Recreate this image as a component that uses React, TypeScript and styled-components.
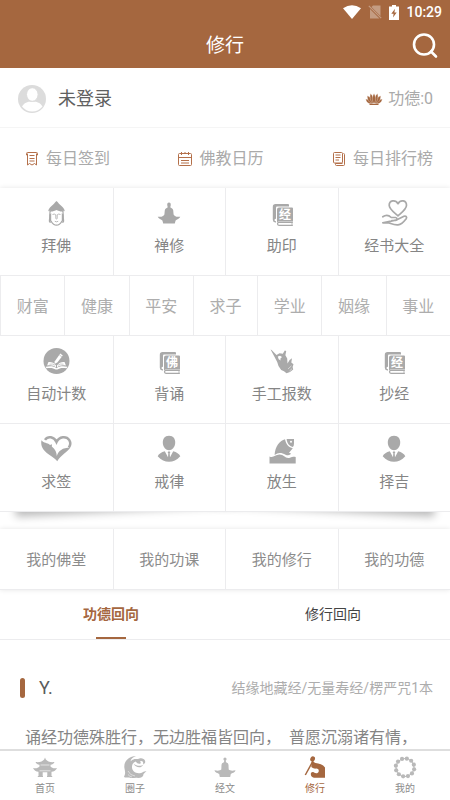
import React from "react";
import styled, { createGlobalStyle } from "styled-components";

const BROWN = "#a5673f";
const LINE = "#ececee";
const ICON = "#a9a9a9";

const GlobalStyle = createGlobalStyle`
  *, *::before, *::after { box-sizing: border-box; }
  body { margin: 0; background: #fff; }
  body, button, a {
    font-family: Roboto, "Noto Sans CJK SC", sans-serif;
    font-weight: 400;
  }
  button {
    margin: 0;
    padding: 0;
    border: 0;
    background: none;
    color: inherit;
    cursor: pointer;
  }
  a { color: inherit; text-decoration: none; }
  h1, h2, p { margin: 0; font-weight: 400; }
  svg { display: block; flex: none; overflow: visible; }
`;

const Screen = styled.div`
  display: flex;
  flex-direction: column;
  height: 100vh;
  background: #fff;
`;

const Header = styled.header`
  flex: none;
  background: ${BROWN};
  color: #fff;
`;

const StatusBar = styled.div`
  display: flex;
  justify-content: flex-end;
  align-items: center;
  gap: 7px;
  height: 24px;
  padding-right: 8px;
  font-size: 14px;
  font-weight: 500;
  line-height: 24px;
`;

const TitleBar = styled.div`
  display: grid;
  grid-template-columns: 1fr auto 1fr;
  align-items: center;
  height: 44px;
  padding: 0 12px;
`;

const Title = styled.h1`
  grid-column: 2;
  font-size: 19px;
  line-height: 28px;
`;

const SearchButton = styled.button`
  justify-self: end;
`;

const Content = styled.main`
  flex: 1;
  min-height: 0;
  overflow-y: auto;
  scrollbar-width: none;
`;

const Profile = styled.section`
  display: flex;
  justify-content: space-between;
  align-items: center;
  height: 60px;
  padding: 2px 17px 0 18px;
  border-bottom: 1px solid #f5f5f5;
`;

const User = styled.button`
  display: flex;
  align-items: center;
  gap: 12px;
  font-size: 18px;
  line-height: 28px;
  color: #606060;
`;

const Merit = styled.span`
  display: flex;
  align-items: center;
  gap: 6px;
  font-size: 16px;
  line-height: 24px;
  color: #aaa;
`;

const DailyLinks = styled.nav`
  display: flex;
  justify-content: space-between;
  align-items: center;
  height: 60px;
  padding: 2px 17px 0 25px;
`;

const DailyLink = styled.a`
  display: flex;
  align-items: center;
  gap: 7px;
  font-size: 16px;
  line-height: 24px;
  color: #aaa;
`;

const CellGrid = styled.div<{ $columns: number }>`
  display: grid;
  grid-template-columns: repeat(${(p) => p.$columns}, 1fr);
  background: #fff;
`;

const TopGrid = styled(CellGrid)`
  box-shadow: 0 0 5px rgba(0, 0, 0, 0.1);
`;

const Cell = styled.button`
  display: flex;
  flex-direction: column;
  align-items: center;
  gap: 8px;
  padding: 11px 0 18px;
  border-bottom: 1px solid ${LINE};
  font-size: 15px;
  line-height: 22px;
  color: #858585;

  &:not(:nth-child(4n + 1)) {
    border-left: 1px solid ${LINE};
  }
`;

const WishCell = styled.button`
  height: 60px;
  padding-top: 2px;
  border-left: 1px solid ${LINE};
  border-bottom: 1px solid ${LINE};
  font-size: 16px;
  line-height: 24px;
  color: #adadad;
`;

const LiftedPanel = styled.section`
  position: relative;
  isolation: isolate;
  margin-bottom: 17px;

  &::before,
  &::after {
    content: "";
    position: absolute;
    z-index: -1;
    bottom: 15px;
    width: 50%;
    height: 20%;
    box-shadow: 0 14px 9px rgba(0, 0, 0, 0.28);
  }
  &::before {
    left: 14px;
    transform: rotate(-3deg);
  }
  &::after {
    right: 14px;
    transform: rotate(3deg);
  }
`;

const MineCell = styled.button`
  height: 61px;
  padding-top: 2px;
  border-bottom: 1px solid ${LINE};
  font-size: 15px;
  line-height: 22px;
  color: #8c8c8c;

  &:not(:first-child) {
    border-left: 1px solid ${LINE};
  }
`;

const Tabs = styled.div`
  display: grid;
  grid-template-columns: 1fr 1fr;
  height: 50px;
  padding-right: 6px;
  border-bottom: 1px solid ${LINE};
`;

const Tab = styled.button<{ $active?: boolean }>`
  display: flex;
  flex-direction: column;
  align-items: center;
  justify-content: space-between;
  padding-top: 13px;
  font-size: 14px;
  line-height: 22px;
  font-weight: ${(p) => (p.$active ? 700 : 400)};
  color: ${(p) => (p.$active ? BROWN : "#444")};

  &::after {
    content: "";
    width: 30px;
    height: 2px;
    background: ${(p) => (p.$active ? BROWN : "transparent")};
  }
`;

const Post = styled.article`
  padding: 36px 17px 24px 20px;
`;

const PostHead = styled.div`
  display: flex;
  align-items: center;
  height: 24px;
  font-size: 14px;
  line-height: 24px;
  color: #adadad;

  &::before {
    content: "";
    width: 5px;
    height: 20px;
    margin-right: 14px;
    border-radius: 3px;
    background: ${BROWN};
  }
`;

const PostName = styled.h2`
  flex: 1;
  font-size: 18px;
  line-height: 24px;
  color: #5c5c5c;
`;

const PostText = styled.p`
  padding: 26px 0 0 5px;
  font-size: 16px;
  line-height: 24px;
  color: #858585;
  white-space: pre-wrap;
`;

const TabBar = styled.nav`
  flex: none;
  display: grid;
  grid-template-columns: repeat(5, 1fr);
  border-top: 2px solid #dedede;
  background: #fff;
`;

const TabBarItem = styled.a<{ $active?: boolean }>`
  display: flex;
  flex-direction: column;
  align-items: center;
  gap: 1px;
  height: 49px;
  padding-top: 5px;
  font-size: 10px;
  line-height: 16px;
  color: ${(p) => (p.$active ? BROWN : "#8c8c8c")};

  svg {
    color: ${(p) => (p.$active ? BROWN : "#b9b9b9")};
  }
`;

/* ---------- icons ---------- */

const CellSvg = ({ children }: { children: React.ReactNode }) => (
  <svg width="28" height="28" viewBox="0 0 28 28" fill={ICON} aria-hidden="true">
    {children}
  </svg>
);

const BuddhaIcon = () => (
  <CellSvg>
    <path d="M14.500 2C15.800 2.700 16.200 4 17.800 5.500C20 7.500 22.500 9.300 22.800 12.300C19.500 11.300 17 10.800 14.500 10.800S9.500 11.300 6.200 12.300C6.500 9.300 9 7.500 11.200 5.500C12.800 4 13.200 2.700 14.500 2Z" />
    <path
      d="M8.300 11.500C7.300 14.500 8.200 18 7.400 21.500C7.200 23.300 8.500 23.600 9.300 22.500C10.800 25.200 12.500 26.200 14.500 26.200S18.200 25.200 19.700 22.500C20.500 23.600 21.800 23.300 21.600 21.500C20.800 18 21.700 14.500 20.700 11.500"
      fill="#fff"
      stroke={ICON}
      strokeWidth="1.200"
    />
    <path d="M7.500 12.500C10 12.800 13 12 14.500 11C16 12 19 12.800 21.500 12.500L20 10H9Z" />
    <path d="M7.500 15.500L9.200 14V22L7.500 23ZM21.500 15.500L19.800 14V22L21.500 23Z" />
    <path
      d="M10.500 15.500Q12.500 14.500 13.800 15.800V19.600Q14.500 20.300 15.200 19.600V15.800Q16.500 14.500 18.500 15.500M12.800 22.300Q14.500 23.300 16.200 22.300"
      fill="none"
      stroke={ICON}
      strokeWidth=".8"
    />
  </CellSvg>
);

const SitIcon = () => (
  <CellSvg>
    <path d="M14 3.500C15.400 3.500 16 4.600 15.700 6.400L15.300 8.300C15.600 9.200 17.900 9.200 18.200 11.200L18.600 15.500C19.500 17 20.800 17.300 21.500 17.700L25.300 17.700C24.500 19.600 21.700 20.400 20.600 21.600L19.800 24.600H8.200L7.400 21.600C6.300 20.400 3.500 19.600 2.700 17.700L6.500 17.700C7.200 17.300 8.500 17 9.400 15.500L9.800 11.200C10.100 9.200 12.400 9.200 12.700 8.300L12.300 6.400C12 4.600 12.600 3.500 14 3.500Z" />
  </CellSvg>
);

const BookIcon = ({ mark }: { mark: string }) => (
  <CellSvg>
    <path d="M7.500 5H20Q21 5 21 6V7.500H9Q8 7.500 8 8.800V19.800Q6.500 19.800 6.500 21T8 22.200V23.500H7.300Q4.800 23.300 4.800 20.800V7.800Q4.800 5 7.500 5Z" />
    <path d="M11 8.500H24Q25 8.500 25 9.500V22.600H11Q9.800 22.600 9 23.500V10.500Q9 8.500 11 8.500Z" />
    <path
      d="M24.800 23.300H11Q9.500 23.400 9.500 24.800T11 26.300H24.800"
      fill="none"
      stroke={ICON}
      strokeWidth="1.200"
    />
    <path d="M24 23V26.500" stroke={ICON} strokeWidth=".8" />
    <text
      x="17"
      y="20"
      fill="#fff"
      fontSize="12"
      fontWeight="700"
      textAnchor="middle"
      fontFamily='"Noto Sans CJK SC", sans-serif'
    >
      {mark}
    </text>
  </CellSvg>
);

const HandHeartIcon = () => (
  <CellSvg>
    <g fill="none" stroke={ICON} strokeWidth="1.700" strokeLinejoin="round" strokeLinecap="round">
      <path d="M18 16.800C14.300 13.600 9.200 10.300 9.200 6.300C9.200 1.300 15.300 .2 18 4.700C20.700 .2 26.500 1.300 26.500 6.300C26.500 10.300 21.700 13.600 18 16.800Z" />
      <path d="M2.800 17.800C5.500 15.900 9 16.300 11.300 18.500H15.500C17.500 18.700 17.500 21.300 15.500 21.500H11.800M16.900 20.800L24 17.200C26 16.600 27.300 18 26.200 19.700C23.800 22.800 21.200 25.500 18 25.900C13 26.300 10.500 24 7.500 23.600L2.800 23.800Z" />
    </g>
  </CellSvg>
);

const WriteIcon = () => (
  <CellSvg>
    <circle cx="14.500" cy="14" r="13" />
    <g fill="#fff">
      <path d="M12.800 14.200L18.300 6.600L20.800 8.400L15.300 15.600L12.400 16.900Z" />
      <path d="M14 18.500C12.300 15.800 9 14.800 6.300 15.200L5.100 18.600C8.500 17.800 11.900 18.300 14 20.300Z" />
      <path d="M15 18.500C16.700 15.800 20 14.800 22.700 15.200L23.900 18.600C20.500 17.800 17.100 18.300 15 20.300Z" />
      <path d="M3.600 19.800C7.500 18.700 12 19 14.500 21.200C17 19 21.500 18.700 25.400 19.800L24.600 21.300C20.500 20.400 17.500 21 15.300 22.500H13.700C11.500 21 8.500 20.400 4.400 21.300Z" />
    </g>
    <path
      d="M17.400 8L19.900 9.800M7.500 17.200Q11 16.400 13 18.200M21.500 17.200Q18 16.400 16 18.200"
      fill="none"
      stroke={ICON}
      strokeWidth=".6"
    />
  </CellSvg>
);

const MudraIcon = () => (
  <CellSvg>
    <path d="M2.600 2.600L3.600 3L8.500 8L11.500 6.300L14.800 6.800L16.800 3.600L18.200 4L17.400 8.200L19.200 11.500L19.500 16.500L21.600 13L24 11.300L23.300 15.500L25.500 17.300L24.600 20L25.200 22.500L22 25L18.500 26.300L16 24.300L13.200 22.900L10.500 19L9.200 15L5.800 8.500Z" />
    <path d="M9.800 9.600L12 8.700L14 10L12.300 11.700L12.700 13.500L10.700 12.200Z" fill="#fff" />
    <path d="M20 22L23.500 18.800M21.500 24L24 21.700" fill="none" stroke="#fff" strokeWidth=".5" />
  </CellSvg>
);

const HeartLeafIcon = () => (
  <CellSvg>
    <path
      d="M3 4.900C6 .5 12 1.600 14.500 7C17.300 1.200 24.300 .7 27.300 5.100C29 8 28.300 10.500 26.800 12.500"
      fill="none"
      stroke={ICON}
      strokeWidth="2.500"
    />
    <path d="M-.6 5.300C2 8.300 5 7.500 8 9.900L10 9.200L9.800 11.500C13.500 14.200 14.600 17.500 14.800 21C16.300 16 20.500 12.500 28.300 12.500C26 17 19 19.500 15.200 26.300C10.500 20 -2.500 17.500 -.6 5.300Z" />
  </CellSvg>
);

const PersonIcon = () => (
  <CellSvg>
    <path d="M14 .8C18.400 .8 20.400 4 20.200 8C19.900 12.200 17.200 15.200 14 15.200S8.100 12.200 7.800 8C7.600 4 9.600 .8 14 .8Z" />
    <path d="M9.800 16.200L13 22.300L13.300 18.300L12.600 17.200L13.200 16.500H14.800L15.400 17.200L14.700 18.300L15 22.300L18.200 16.200C21.500 17 24.200 18.700 25.300 21.300C22 25 18 26.800 14 26.800S6 25 2.700 21.300C3.800 18.700 6.500 17 9.800 16.200Z" />
  </CellSvg>
);

const FishIcon = () => (
  <CellSvg>
    <path d="M17 4.300C12 5.500 7 11.500 6.600 20C10 17.300 13.500 17.300 17.500 19.700C20 20.800 22 20.400 23 18.600L21 17.800L24.800 13.300C21 12.500 18 9.500 17 4.300Z" />
    <path d="M18.600 4.100H26V8.500Q26 11 24.700 12C21.500 11.400 19 8.500 18.600 4.100Z" />
    <circle cx="23" cy="6.800" r="1" fill="#fff" />
    <path d="M1.500 21.500C5.500 23.500 7 19.500 11.500 19.600C16 19.600 17.500 24.300 22 22.700C24.300 21.900 25.500 21.600 27.700 22V28.500H1.500Z" />
  </CellSvg>
);

const NavSvg = ({ children }: { children: React.ReactNode }) => (
  <svg width="24" height="24" viewBox="0 0 24 24" fill="currentColor" aria-hidden="true">
    {children}
  </svg>
);

const TempleIcon = () => (
  <NavSvg>
    <path d="M12 1.500L12.800 3.500C14.500 5.500 17.500 6.600 21.500 6C20.500 8 19.500 8.500 17.500 8.700V10.500C19 12 21 12.700 24 12C23 14.500 21 15.500 18.500 15.700V20.500H14.300V16.300H9.700V20.500H5.500V15.700C3 15.500 1 14.500 0 12C3 12.700 5 12 6.500 10.500V8.700C4.500 8.500 3.500 8 2.500 6C6.500 6.600 9.500 5.500 11.200 3.500Z" />
    <path d="M7.500 9H16.500M6.500 14.800H17.500" stroke="#fff" strokeWidth=".6" />
    <path d="M4.800 20.500H10M14 20.500H19.200" stroke="currentColor" strokeWidth="1.200" />
  </NavSvg>
);

const WaveIcon = () => (
  <NavSvg>
    <path d="M13 0C5 .5 .2 6 1.500 12.500C2 15.500 2.800 17 1 21C3 22.300 5 20.800 7 21.800C10 22.700 12.500 21 15 22C18.500 22 20.500 20.800 20.500 18L23.500 15L20.500 15.700C15 19.500 8.500 16 9 10.500C9.200 8 10.500 6.500 12.700 5.500C13.700 7 15 8.200 17.500 7.500C18.200 6.500 17.300 5.500 16.500 6C18.500 3.800 21 5.500 20 8.500C22.500 7.800 23.200 4.500 20.500 2.900C17.500 1.300 15.500 3.500 12.500 3C9.500 3 7.500 5.500 7.500 5.500C7.700 3 10 1 13 0Z" />
    <path d="M10.500 7.500C13 10.200 18.500 10.500 20.300 8.700C19 12 13 12.600 10.500 7.500Z" />
    <path d="M5 15Q7 19.500 12 20M5 18.500Q6.500 20.500 9 21" fill="none" stroke="#fff" strokeWidth=".5" />
  </NavSvg>
);

const ScriptureIcon = () => (
  <NavSvg>
    <circle cx="12" cy="3" r="1.600" />
    <path d="M11.400 3H12.600L13 6.200C14 6.800 15.300 7 15.500 9L15.700 13.500C17 14.500 18.500 15 22.500 14.300C22.200 16.500 19 17.200 17.800 18L17.200 21H6.800L6.200 18C5 17.200 1.800 16.500 1.500 14.300C5.500 15 7 14.500 8.300 13.500L8.500 9C8.700 7 10 6.800 11 6.200Z" />
  </NavSvg>
);

const PracticeIcon = () => (
  <NavSvg>
    <ellipse cx="9.600" cy="3" rx="2.300" ry="2.700" transform="rotate(25 9.600 3)" />
    <path d="M8.500 6.300C10 5.600 11.500 6.500 12.500 7C16 7.500 20 8.500 22 11.500V21.800H11C9 21.300 7.800 20.200 7.800 18C7.800 16.300 9.500 15.500 11 16.500C12.500 17.700 15.200 17.700 15.700 15.500C16.200 13.500 14.500 12.300 12.800 12.600C11.500 12.800 10 12 8.300 11Z" />
    <path d="M10 5L2.300 19" fill="none" stroke="currentColor" strokeWidth="1.500" />
  </NavSvg>
);

const beads = Array.from({ length: 12 }, (_, i) => {
  const angle = (i / 12) * Math.PI * 2 + 0.2;
  return { x: 12 + Math.cos(angle) * 9.3, y: 11.5 + Math.sin(angle) * 9 };
});

const BeadsIcon = () => (
  <NavSvg>
    <circle cx="12" cy="11.500" r="9" fill="none" stroke="currentColor" strokeWidth="1" />
    {beads.map((b, i) => (
      <circle key={i} cx={b.x} cy={b.y} r="2.100" />
    ))}
  </NavSvg>
);

const WifiIcon = () => (
  <svg width="18" height="14" viewBox="0 0 18 14" fill="#fff" aria-hidden="true">
    <path d="M0 3.200Q9-2.800 18 3.200L9 14Z" />
  </svg>
);

const NoSimIcon = () => (
  <svg width="14" height="14" viewBox="0 0 14 14" fill="#fff" opacity=".35" aria-hidden="true">
    <path d="M5 .5H12.500V11L3.500 2ZM2 4L11.500 13.500H2Z" />
    <path d="M.8 .8L13.200 13.200" stroke="#fff" strokeWidth="1.200" />
  </svg>
);

const BatteryIcon = () => (
  <svg width="10" height="15" viewBox="0 0 10 15" fill="#fff" aria-hidden="true">
    <path d="M3 0H7V1.500H10V15H0V1.500H3Z" />
    <path d="M6 3.800L2.300 8.700H4.600L4 12.500L7.700 7.500H5.400Z" fill={BROWN} />
  </svg>
);

const SearchIcon = () => (
  <svg
    width="26"
    height="26"
    viewBox="0 0 26 26"
    fill="none"
    stroke="#fff"
    strokeWidth="2.600"
    strokeLinecap="round"
    aria-hidden="true"
  >
    <circle cx="12" cy="11.500" r="10" />
    <path d="M19 18.500L24 23.500" />
  </svg>
);

const AvatarIcon = () => (
  <svg width="28" height="28" viewBox="0 0 28 28" aria-hidden="true">
    <circle cx="14" cy="14" r="14" fill="#dcdcdc" />
    <path
      d="M4 21.500C5.500 18.500 8 17.500 10.500 16.700H18C20.500 17.500 23 18.500 24.500 21.500C22 24.500 18.500 26.500 14.200 26.500S6.500 24.500 4 21.500Z"
      fill="#fff"
    />
    <ellipse cx="14.300" cy="9.500" rx="5.800" ry="6.800" fill="#fff" stroke="#dcdcdc" />
  </svg>
);

const LotusIcon = () => (
  <svg width="16" height="12" viewBox="0 0 16 12" fill={BROWN} stroke="#fff" strokeWidth=".3" aria-hidden="true">
    <path d="M6 11C2.500 11 .3 9.500 -.3 6.300C3 5.700 5.200 7.500 6.500 10.500ZM10 11C13.500 11 15.700 9.500 16.300 6.300C13 5.700 10.800 7.500 9.500 10.500Z" />
    <path d="M6.300 10.800C2.500 9 1 6 1.300 2.800C4.500 3.700 6.500 6.500 6.800 10.500ZM9.700 10.800C13.500 9 15 6 14.700 2.800C11.500 3.700 9.500 6.500 9.200 10.500Z" />
    <path d="M6.800 10.800C4 7.500 3.500 3.500 4.500 .5C7 2.500 7.800 6.500 7.500 10.800ZM9.200 10.800C12 7.500 12.500 3.500 11.500 .5C9 2.500 8.200 6.500 8.500 10.800Z" />
    <path d="M8 11C5.600 7.500 6 3.500 8 .5C10 3.500 10.400 7.500 8 11Z" />
    <path d="M3.500 11.500H12.500" stroke={BROWN} strokeWidth="1" />
  </svg>
);

const LineSvg = ({ children }: { children: React.ReactNode }) => (
  <svg
    width="14"
    height="14"
    viewBox="0 0 14 14"
    fill="none"
    stroke="#b4704a"
    strokeWidth="1"
    strokeLinejoin="round"
    aria-hidden="true"
  >
    {children}
  </svg>
);

const CheckInIcon = () => (
  <LineSvg>
    <path d="M2.500 .5H11.500Q12.500 .5 12.500 1.500V3H11.500V13L9.500 11.500L7 13L4.500 11.500L2.500 13V3H1.500V1.500Q1.500 .5 2.500 .5ZM2.500 3V1.500M11.500 3V1.500M4.500 3.500H9.500M4.500 6.500H9.500M4.500 9H9.500" />
  </LineSvg>
);

const CalendarIcon = () => (
  <LineSvg>
    <rect x=".5" y="1.500" width="13" height="12" rx="1" />
    <path d="M.5 5.500H13.500M3 8.500H11M3 11H11M3.500 0V3M10.500 0V3M7 0V2" />
  </LineSvg>
);

const RankIcon = () => (
  <LineSvg>
    <rect x="1.500" y=".5" width="9" height="10.500" rx="1" />
    <path d="M3.500 3H8.500M3.500 5.500H8.500M3.500 8H7M11.500 1.500Q12.500 1.500 12.500 2.500V12.500Q12.500 13.500 11.500 13.500H4.500Q3.500 13.500 3.500 12.500V11.500M10.500 11.500H3.500" />
  </LineSvg>
);

/* ---------- data ---------- */

const daily = [
  { label: "每日签到", icon: <CheckInIcon /> },
  { label: "佛教日历", icon: <CalendarIcon /> },
  { label: "每日排行榜", icon: <RankIcon /> },
];

const practices = [
  { label: "拜佛", icon: <BuddhaIcon /> },
  { label: "禅修", icon: <SitIcon /> },
  { label: "助印", icon: <BookIcon mark="经" /> },
  { label: "经书大全", icon: <HandHeartIcon /> },
];

const wishes = ["财富", "健康", "平安", "求子", "学业", "姻缘", "事业"];

const tools = [
  { label: "自动计数", icon: <WriteIcon /> },
  { label: "背诵", icon: <BookIcon mark="佛" /> },
  { label: "手工报数", icon: <MudraIcon /> },
  { label: "抄经", icon: <BookIcon mark="经" /> },
  { label: "求签", icon: <HeartLeafIcon /> },
  { label: "戒律", icon: <PersonIcon /> },
  { label: "放生", icon: <FishIcon /> },
  { label: "择吉", icon: <PersonIcon /> },
];

const mine = ["我的佛堂", "我的功课", "我的修行", "我的功德"];

const pages = [
  { label: "首页", icon: <TempleIcon /> },
  { label: "圈子", icon: <WaveIcon /> },
  { label: "经文", icon: <ScriptureIcon /> },
  { label: "修行", icon: <PracticeIcon />, active: true },
  { label: "我的", icon: <BeadsIcon /> },
];

export default function App() {
  return (
    <Screen>
      <GlobalStyle />
      <Header>
        <StatusBar>
          <WifiIcon />
          <NoSimIcon />
          <BatteryIcon />
          <span>10:29</span>
        </StatusBar>
        <TitleBar>
          <Title>修行</Title>
          <SearchButton aria-label="搜索">
            <SearchIcon />
          </SearchButton>
        </TitleBar>
      </Header>

      <Content>
        <Profile>
          <User>
            <AvatarIcon />
            未登录
          </User>
          <Merit>
            <LotusIcon />
            功德:0
          </Merit>
        </Profile>

        <DailyLinks>
          {daily.map((d) => (
            <DailyLink key={d.label} href="#">
              {d.icon}
              {d.label}
            </DailyLink>
          ))}
        </DailyLinks>

        <TopGrid $columns={4}>
          {practices.map((p) => (
            <Cell key={p.label}>
              {p.icon}
              {p.label}
            </Cell>
          ))}
        </TopGrid>

        <CellGrid $columns={7}>
          {wishes.map((w) => (
            <WishCell key={w}>{w}</WishCell>
          ))}
        </CellGrid>

        <LiftedPanel>
          <CellGrid $columns={4}>
            {tools.map((t) => (
              <Cell key={t.label}>
                {t.icon}
                {t.label}
              </Cell>
            ))}
          </CellGrid>
        </LiftedPanel>

        <TopGrid $columns={4}>
          {mine.map((m) => (
            <MineCell key={m}>{m}</MineCell>
          ))}
        </TopGrid>

        <Tabs role="tablist">
          <Tab role="tab" aria-selected="true" $active>
            功德回向
          </Tab>
          <Tab role="tab" aria-selected="false">
            修行回向
          </Tab>
        </Tabs>

        <Post>
          <PostHead>
            <PostName>Y.</PostName>
            <span>结缘地藏经/无量寿经/楞严咒1本</span>
          </PostHead>
          <PostText>{"诵经功德殊胜行，无边胜福皆回向，  普愿沉溺诸有情，"}</PostText>
        </Post>
      </Content>

      <TabBar>
        {pages.map((p) => (
          <TabBarItem key={p.label} href="#" $active={p.active} aria-current={p.active ? "page" : undefined}>
            {p.icon}
            {p.label}
          </TabBarItem>
        ))}
      </TabBar>
    </Screen>
  );
}
